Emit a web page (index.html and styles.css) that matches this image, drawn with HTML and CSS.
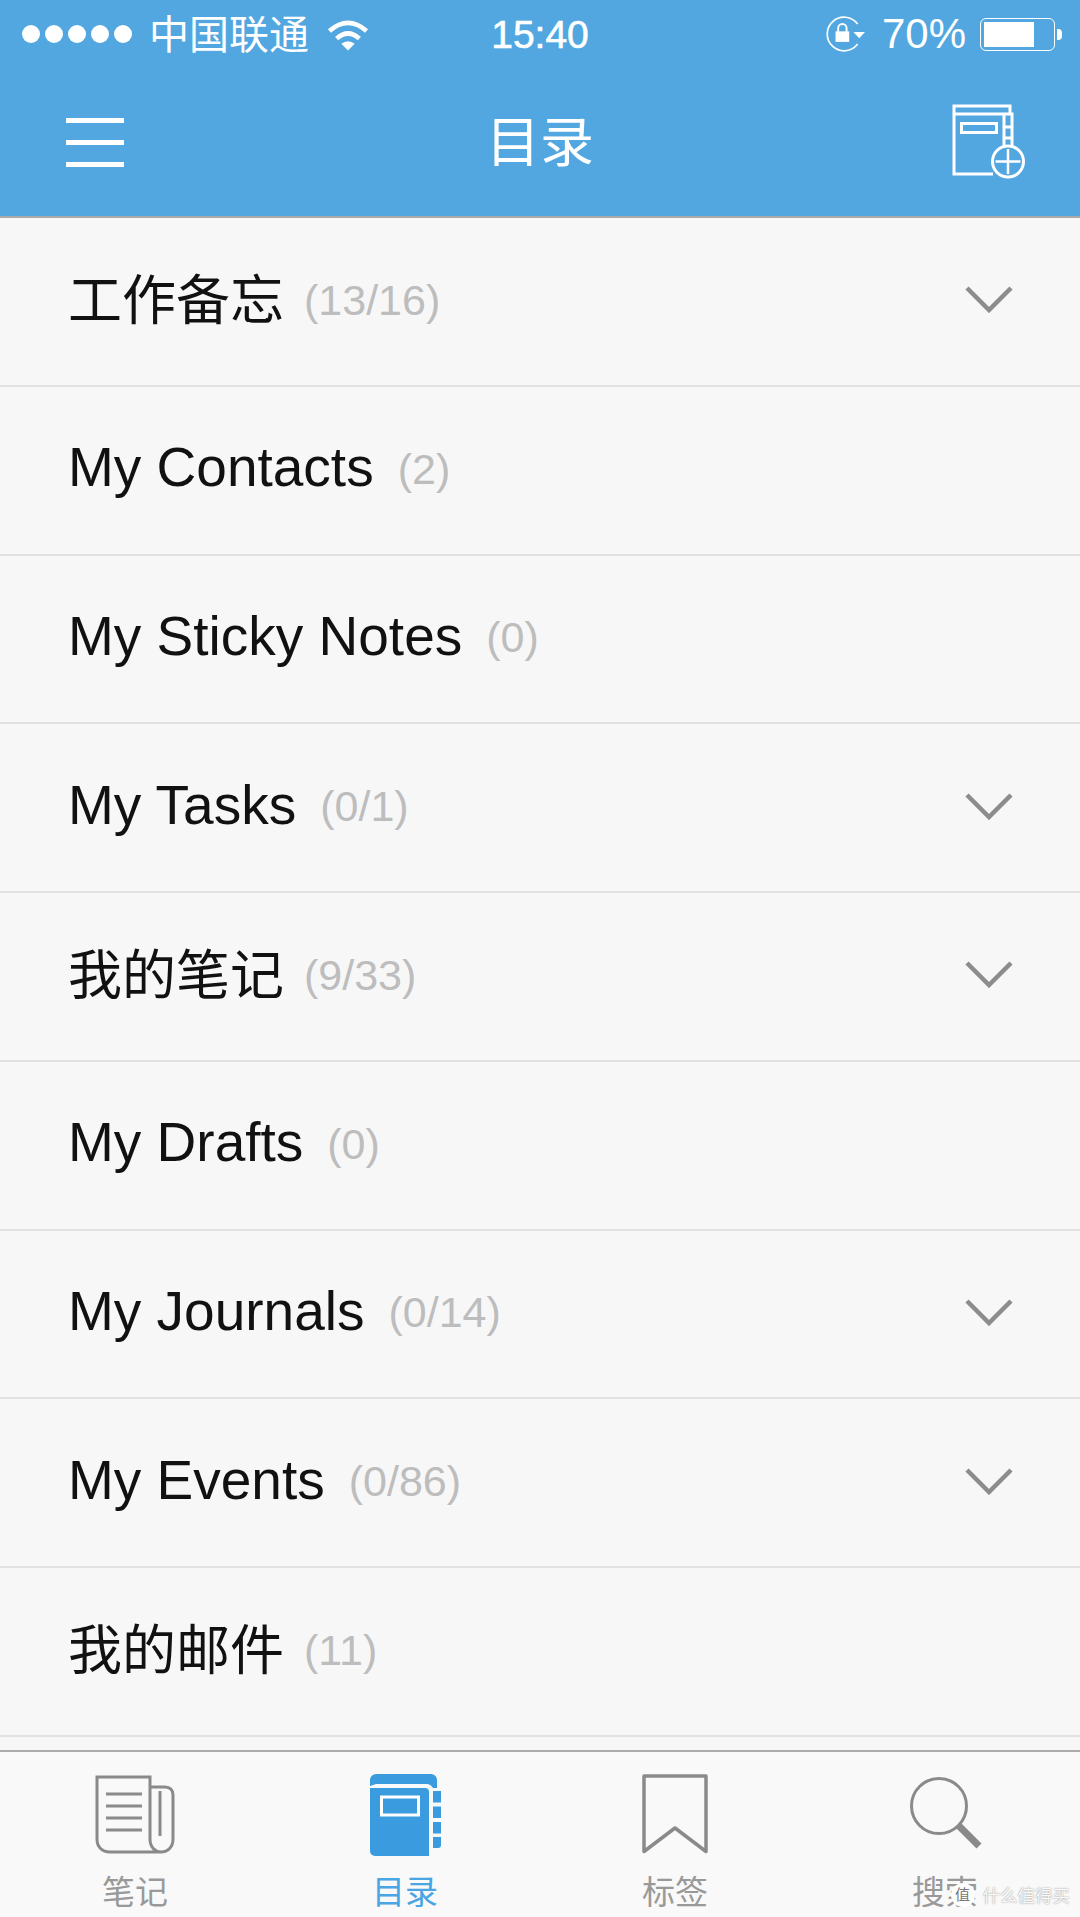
FILE: index.html
```html
<!DOCTYPE html>
<html lang="zh-CN">
<head>
    <meta charset="UTF-8">
    <meta name="viewport" content="width=device-width, initial-scale=1.0">
    <title>目录</title>
    <link rel="stylesheet" href="styles.css">
</head>
<body>
    <div class="screen">
        <header class="top">
            <div class="status">
                <div class="status-left">
                    <div class="dots"><i></i><i></i><i></i><i></i><i></i></div>
                    <span class="carrier">中国联通</span>
                    <svg class="wifi" width="42" height="33" viewBox="0 0 40 32">
                        <path d="M2 12.5Q20 -3 38 12.5" fill="none" stroke="#fff" stroke-width="4.5"/>
                        <path d="M9 20Q20 10 31 20" fill="none" stroke="#fff" stroke-width="4.5"/>
                        <path d="M13.5 25Q20 20 26.5 25L20 31.5Z" fill="#fff"/>
                    </svg>
                </div>
                <span class="time">15:40</span>
                <div class="status-right">
                    <svg class="lock" width="40" height="38" viewBox="0 0 38 36">
                        <path d="M31 8.5A16 16 0 1 0 31 27.5" fill="none" stroke="#fff" stroke-width="1.6"/>
                        <path d="M27 16H38L32.5 22Z" fill="#fff"/>
                        <rect x="10" y="15.5" width="13" height="10" fill="#fff"/>
                        <path d="M12.5 16V12.5a4 4 0 0 1 8 0V16" fill="none" stroke="#fff" stroke-width="1.8"/>
                    </svg>
                    <span class="percent">70%</span>
                    <div class="battery"><div class="battery-fill"></div></div>
                    <div class="battery-nub"></div>
                </div>
            </div>
            <div class="nav">
                <div class="menu"><i></i><i></i><i></i></div>
                <h1 class="title">目录</h1>
                <svg class="add" width="74" height="76" viewBox="0 0 74 76">
                    <g fill="none" stroke="#fff" stroke-width="3">
                        <path d="M2 10V2H58V10"/>
                        <path d="M2 10H60V43"/>
                        <path d="M2 10V70H41"/>
                        <path d="M52 10V43M52 23H60M52 34H60"/>
                        <rect x="9.500" y="19.500" width="35" height="9"/>
                        <circle cx="56" cy="57.500" r="15.500"/>
                        <path d="M56 45V70M43.500 57.500H68.500" stroke-width="2.500"/>
                    </g>
                </svg>
            </div>
        </header>

        <ul class="list">
            <li class="row">
                <span class="name cjk">工作备忘</span><span class="count">(13/16)</span>
                <svg class="chevron" width="48" height="28" viewBox="0 0 48 28"><path d="M2 3L24 25L46 3"/></svg>
            </li>
            <li class="row">
                <span class="name">My Contacts</span><span class="count">(2)</span>
            </li>
            <li class="row">
                <span class="name">My Sticky Notes</span><span class="count">(0)</span>
            </li>
            <li class="row">
                <span class="name">My Tasks</span><span class="count">(0/1)</span>
                <svg class="chevron" width="48" height="28" viewBox="0 0 48 28"><path d="M2 3L24 25L46 3"/></svg>
            </li>
            <li class="row">
                <span class="name cjk">我的笔记</span><span class="count">(9/33)</span>
                <svg class="chevron" width="48" height="28" viewBox="0 0 48 28"><path d="M2 3L24 25L46 3"/></svg>
            </li>
            <li class="row">
                <span class="name">My Drafts</span><span class="count">(0)</span>
            </li>
            <li class="row">
                <span class="name">My Journals</span><span class="count">(0/14)</span>
                <svg class="chevron" width="48" height="28" viewBox="0 0 48 28"><path d="M2 3L24 25L46 3"/></svg>
            </li>
            <li class="row">
                <span class="name">My Events</span><span class="count">(0/86)</span>
                <svg class="chevron" width="48" height="28" viewBox="0 0 48 28"><path d="M2 3L24 25L46 3"/></svg>
            </li>
            <li class="row">
                <span class="name cjk">我的邮件</span><span class="count">(11)</span>
            </li>
        </ul>

        <nav class="tabs">
            <div class="tab">
                <svg width="84" height="84" viewBox="0 0 84 84">
                    <g fill="none" stroke="#8a8a8a" stroke-width="3">
                        <path d="M4 4H57V66C57 74 62 79 68 79H17C9 79 4 74 4 66Z"/>
                        <path d="M57 14H72C77 14 80 17 80 22V66C80 74 75 79 68 79"/>
                        <path d="M13 21H49M13 33H49M13 45H49M13 57H49"/>
                        <path d="M67 18V63"/>
                    </g>
                </svg>
                <span>笔记</span>
            </div>
            <div class="tab active">
                <svg width="84" height="84" viewBox="0 0 84 84">
                    <g fill="#3a9bdf">
                        <path d="M7 13V7a6 6 0 0 1 6-6H68a6 6 0 0 1 6 6V15H70C68 12 66 11 64 11H13Z"/>
                        <path d="M7 15H62a4 4 0 0 1 4 4V83H12a5 5 0 0 1-5-5Z"/>
                        <rect x="70" y="18" width="8" height="11.500"/>
                        <rect x="70" y="33.500" width="8" height="11.500"/>
                        <rect x="70" y="49" width="8" height="11.500"/>
                        <path d="M70 64H78V72a3 3 0 0 1-3 3H70Z"/>
                    </g>
                    <rect x="18.500" y="24" width="37" height="18" fill="none" stroke="#fff" stroke-width="3"/>
                </svg>
                <span>目录</span>
            </div>
            <div class="tab">
                <svg width="84" height="84" viewBox="0 0 84 84">
                    <path d="M11 3H73V78.500L42 55L11 78.500Z" fill="none" stroke="#8a8a8a" stroke-width="3.500" stroke-linejoin="round"/>
                </svg>
                <span>标签</span>
            </div>
            <div class="tab">
                <svg class="search" width="84" height="84" viewBox="0 0 84 84">
                    <circle cx="36" cy="33" r="27.500" fill="none" stroke="#8a8a8a" stroke-width="3"/>
                    <path d="M56 53L76 73" stroke="#8a8a8a" stroke-width="7"/>
                </svg>
                <span>搜索</span>
            </div>
        </nav>

        <div class="watermark"><b>值</b><span>什么值得买</span></div>
    </div>
</body>
</html>
```

FILE: styles.css
```css
* {
    box-sizing: border-box;
}

body {
    margin: 0;
    font-family: 'Liberation Sans', 'Noto Sans CJK SC', sans-serif;
}

.screen {
    position: relative;
    width: 1080px;
    height: 1917px;
    display: flex;
    flex-direction: column;
    overflow: hidden;
    background: #f7f7f7;
}

/* Header */
.top {
    height: 218px;
    flex: none;
    background: #52a7e0;
    border-bottom: 2px solid #a9a9a9;
    color: #fff;
}

.status {
    height: 68px;
    display: grid;
    grid-template-columns: 1fr auto 1fr;
    align-items: center;
    padding: 0 22px;
}

.status-left,
.status-right {
    display: flex;
    align-items: center;
}

.status-right {
    justify-content: flex-end;
}

.dots {
    display: flex;
    gap: 5px;
}

.dots i {
    width: 18px;
    height: 18px;
    border-radius: 50%;
    background: #fff;
}

.carrier {
    margin-left: 17px;
    padding-bottom: 5px;
    font-size: 40px;
}

.wifi {
    margin-left: 18px;
}

.time {
    padding-top: 2px;
    font-size: 39px;
    -webkit-text-stroke: 0.6px #fff;
}

.percent {
    margin-left: 17px;
    font-size: 42px;
}

.battery {
    width: 75px;
    height: 33px;
    margin-left: 14px;
    padding: 3px;
    border: 1.500px solid #fff;
    border-radius: 6px;
}

.battery-fill {
    width: 50px;
    height: 100%;
    background: #fff;
}

.battery-nub {
    width: 5px;
    height: 11px;
    margin: 0 -4px 0 2px;
    background: #fff;
    border-radius: 0 4px 4px 0;
}

.nav {
    height: 148px;
    display: grid;
    grid-template-columns: 1fr auto 1fr;
    align-items: center;
    padding: 0 54px 0 66px;
}

.menu {
    width: 58px;
    display: flex;
    flex-direction: column;
    gap: 17px;
}

.menu i {
    height: 5px;
    background: #fff;
}

.title {
    margin: 0 12px 8px 0;
    font-size: 54px;
    font-weight: 400;
}

.add {
    justify-self: end;
}

/* List */
.list {
    flex: 1;
    margin: 0;
    padding: 0;
    list-style: none;
    overflow: hidden;
}

.row {
    height: 168.750px;
    display: flex;
    align-items: center;
    padding: 0 67px 6px 68px;
    border-bottom: 2px solid #e1e1e1;
}

.name {
    font-size: 55px;
    color: #111;
}

.name.cjk {
    margin-bottom: 3px;
    font-size: 54px;
}

.count {
    margin-top: 4px;
    margin-left: 24px;
    font-size: 43px;
    color: #bdbdbd;
}

.cjk + .count {
    margin-left: 20px;
}

.chevron {
    margin-left: auto;
    margin-top: 2px;
    fill: none;
    stroke: #8c8c8c;
    stroke-width: 4.500;
}

/* Tab bar */
.tabs {
    height: 167px;
    flex: none;
    display: grid;
    grid-template-columns: repeat(4, 1fr);
    background: #f9f9f9;
    border-top: 2px solid #ababab;
}

.tab {
    display: flex;
    flex-direction: column;
    align-items: center;
    padding-top: 21px;
    font-size: 33px;
    line-height: 40px;
    color: #999;
}

.tab svg {
    display: block;
    flex: none;
    margin-bottom: 16px;
}

.tab.active {
    color: #4aa5e3;
}

/* Site watermark over the corner */
.watermark {
    position: absolute;
    right: 10px;
    bottom: 10px;
    display: flex;
    align-items: center;
    gap: 8px;
    font-size: 17.500px;
    color: #fafafa;
    text-shadow: 0 0 1.500px #777;
}

.watermark b {
    width: 24px;
    height: 24px;
    border-radius: 50%;
    background: #fff;
    font-size: 15px;
    font-weight: 400;
    line-height: 24px;
    text-align: center;
    color: #777;
    text-shadow: none;
}
```
